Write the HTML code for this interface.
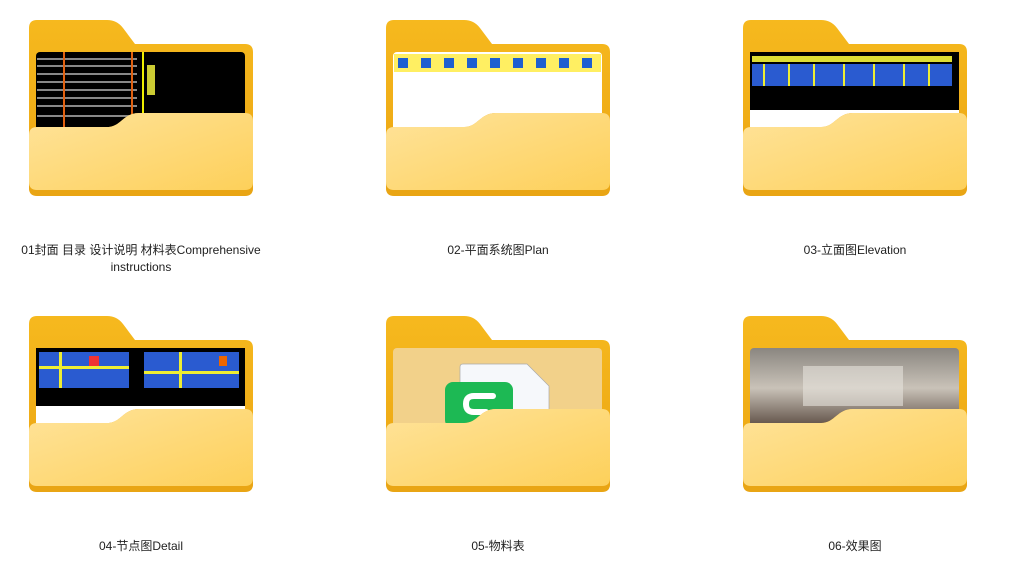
<!DOCTYPE html>
<html><head><meta charset="utf-8"><style>
body{margin:0;width:1020px;height:575px;background:#fff;position:relative;overflow:hidden;font-family:"Liberation Sans","Noto Sans CJK SC",sans-serif}
.f{position:absolute;width:224px;height:178px}
.l{position:absolute;width:280px;text-align:center;font-size:12px;color:#222;line-height:17px}
</style></head><body>
<svg width="0" height="0" style="position:absolute"><defs>
<linearGradient id="bk" x1="0" y1="0" x2="0" y2="1"><stop offset="0" stop-color="#f6b91e"/><stop offset="1" stop-color="#eba412"/></linearGradient>
<linearGradient id="fr" x1="0" y1="0" x2="1" y2="1"><stop offset="0" stop-color="#ffe39a"/><stop offset="1" stop-color="#fdd05a"/></linearGradient>
<symbol id="back" viewBox="0 0 224 178"><path d="M0,8 Q0,0 8,0 L78,0 Q88,0 94,8 L106,24 L216,24 Q224,24 224,32 L224,168 Q224,175 216,175 L8,175 Q0,175 0,168 Z" fill="url(#bk)"/></symbol>
<symbol id="front" viewBox="0 0 224 178"><path d="M0,116 Q0,107 8,107 L78,107 C92,107 94,93 110,93 L216,93 Q224,93 224,101 L224,168 Q224,176 216,176 L8,176 Q0,176 0,168 Z" fill="#e9a514"/><path d="M0,115 Q0,107 8,107 L78,107 C92,107 94,93 110,93 L216,93 Q224,93 224,101 L224,162 Q224,170 216,170 L8,170 Q0,170 0,162 Z" fill="url(#fr)"/></symbol>
</defs></svg>

<!-- 1 -->
<div class="f" style="left:29px;top:20px"><svg width="224" height="178"><use href="#back"/>
<rect x="7" y="32" width="209" height="80" rx="4" fill="#000"/>
<g fill="#888"><rect x="8" y="38" width="100" height="2"/><rect x="8" y="45" width="100" height="2"/><rect x="8" y="53" width="100" height="2"/><rect x="8" y="61" width="100" height="2"/><rect x="8" y="69" width="100" height="2"/><rect x="8" y="77" width="100" height="2"/><rect x="8" y="85" width="100" height="2"/><rect x="8" y="95" width="100" height="2"/></g>
<rect x="34" y="32" width="2" height="80" fill="#e06010"/><rect x="102" y="32" width="2" height="80" fill="#e06010"/><rect x="113" y="32" width="2" height="80" fill="#ee0"/><rect x="118" y="45" width="8" height="30" fill="#cc3"/>
<use href="#front"/></svg></div>
<!-- 2 -->
<div class="f" style="left:386px;top:20px"><svg width="224" height="178"><use href="#back"/>
<rect x="7" y="32" width="209" height="80" rx="4" fill="#fff"/>
<rect x="8" y="34" width="207" height="18" fill="#ffeb3b" opacity=".8"/>
<g fill="#1e5fd0"><rect x="12" y="38" width="10" height="10"/><rect x="35" y="38" width="10" height="10"/><rect x="58" y="38" width="10" height="10"/><rect x="81" y="38" width="10" height="10"/><rect x="104" y="38" width="10" height="10"/><rect x="127" y="38" width="10" height="10"/><rect x="150" y="38" width="10" height="10"/><rect x="173" y="38" width="10" height="10"/><rect x="196" y="38" width="10" height="10"/></g>
<use href="#front"/></svg></div>
<!-- 3 -->
<div class="f" style="left:743px;top:20px"><svg width="224" height="178"><use href="#back"/>
<rect x="7" y="32" width="209" height="80" rx="4" fill="#fff"/><rect x="7" y="32" width="209" height="58" fill="#000"/>
<rect x="9" y="36" width="200" height="6" fill="#dd3"/>
<rect x="9" y="44" width="200" height="22" fill="#2a5bd0"/>
<g fill="#ee3"><rect x="20" y="44" width="2" height="22"/><rect x="45" y="44" width="2" height="22"/><rect x="70" y="44" width="2" height="22"/><rect x="100" y="44" width="2" height="22"/><rect x="130" y="44" width="2" height="22"/><rect x="160" y="44" width="2" height="22"/><rect x="185" y="44" width="2" height="22"/></g>
<use href="#front"/></svg></div>
<!-- 4 -->
<div class="f" style="left:29px;top:316px"><svg width="224" height="178"><use href="#back"/>
<rect x="7" y="32" width="209" height="80" rx="4" fill="#fff"/><rect x="7" y="32" width="209" height="58" fill="#000"/>
<rect x="10" y="36" width="90" height="36" fill="#2a5bd0"/><rect x="115" y="36" width="95" height="36" fill="#2a5bd0"/>
<g fill="#ee3"><rect x="10" y="50" width="90" height="3"/><rect x="115" y="55" width="95" height="3"/><rect x="30" y="36" width="3" height="36"/><rect x="150" y="36" width="3" height="36"/></g>
<rect x="60" y="40" width="10" height="10" fill="#e33"/><rect x="190" y="40" width="8" height="10" fill="#e60"/>
<use href="#front"/></svg></div>
<!-- 5 -->
<div class="f" style="left:386px;top:316px"><svg width="224" height="178"><use href="#back"/>
<rect x="7" y="32" width="209" height="80" rx="4" fill="#f2d18a"/>
<path d="M74,51 Q74,48 77,48 L141,48 L163,70 L163,100 L74,100 Z" fill="#f6f8fb" stroke="#aaa" stroke-width=".7"/>
<rect x="59" y="66" width="68" height="46" rx="8" fill="#1db954"/>
<path d="M107,80 L88,80 Q80,80 80,88 Q80,96 88,96 L100,96" stroke="#fff" stroke-width="6" fill="none" stroke-linecap="round"/>
<use href="#front"/></svg></div>
<!-- 6 -->
<div class="f" style="left:743px;top:316px"><svg width="224" height="178"><use href="#back"/>
<linearGradient id="ph" x1="0" y1="0" x2="0" y2="1"><stop offset="0" stop-color="#8a8680"/><stop offset=".5" stop-color="#c9c2b8"/><stop offset="1" stop-color="#5a4a40"/></linearGradient>
<rect x="7" y="32" width="209" height="80" rx="4" fill="url(#ph)"/>
<rect x="60" y="50" width="100" height="40" fill="#e6e2dc" opacity=".6"/>
<use href="#front"/></svg></div>

<div class="l" style="left:1px;top:242px">01封面 目录 设计说明 材料表Comprehensive<br>instructions</div>
<div class="l" style="left:358px;top:242px">02-平面系统图Plan</div>
<div class="l" style="left:715px;top:242px">03-立面图Elevation</div>
<div class="l" style="left:1px;top:538px">04-节点图Detail</div>
<div class="l" style="left:358px;top:538px">05-物料表</div>
<div class="l" style="left:715px;top:538px">06-效果图</div>
</body></html>
